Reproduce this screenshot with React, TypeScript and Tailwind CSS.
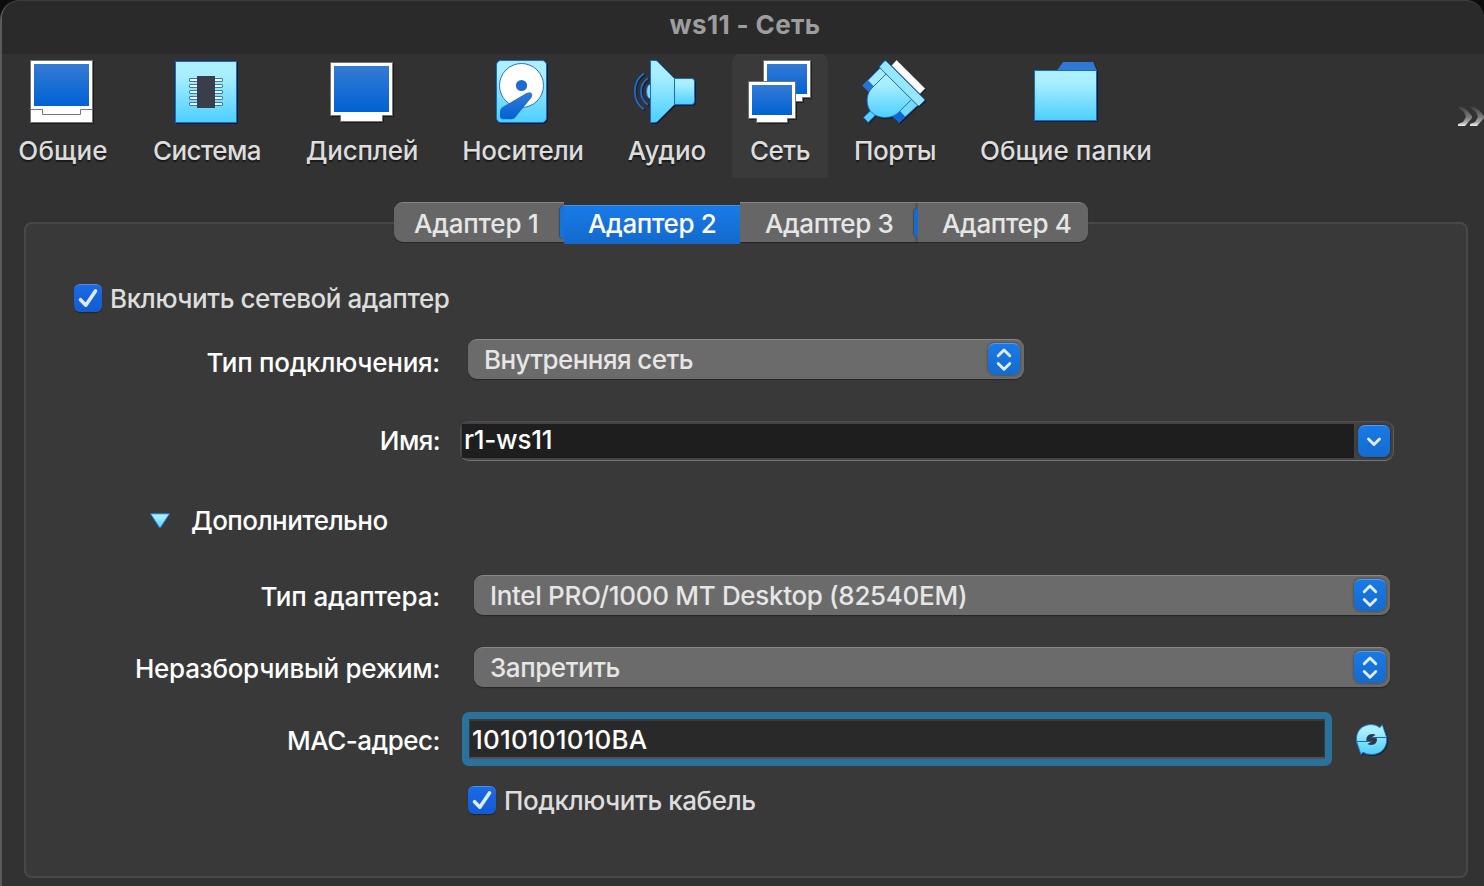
import type { ReactNode } from "react";

const CYAN = "url(#cyan)";
const BLUE = "url(#blue)";
const EDGE = "#1769d6";

function Gradients() {
  return (
    <svg width="0" height="0" className="absolute">
      <defs>
        <linearGradient id="cyan" x1="0" y1="0" x2="0" y2="1">
          <stop offset="0" stopColor="#aef1ff" />
          <stop offset="0.25" stopColor="#a6eeff" />
          <stop offset="1" stopColor="#4ccfff" />
        </linearGradient>
        <linearGradient id="blue" x1="0" y1="0" x2="0" y2="1">
          <stop offset="0" stopColor="#357ad4" />
          <stop offset="1" stopColor="#0062d4" />
        </linearGradient>
        <linearGradient id="more" x1="0" y1="0" x2="0" y2="1">
          <stop offset="0" stopColor="#3c3c3c" />
          <stop offset="0.55" stopColor="#7c7c7c" />
          <stop offset="0.8" stopColor="#a8a8a8" />
          <stop offset="1" stopColor="#f0f0f0" />
        </linearGradient>
      </defs>
    </svg>
  );
}

function Icon({ viewBox, children }: { viewBox: string; children: ReactNode }) {
  return (
    <svg
      width="64"
      height="64"
      viewBox={viewBox}
      className="shrink-0 overflow-visible drop-shadow-[1px_1px_0.5px_rgba(0,0,0,0.45)]"
    >
      {children}
    </svg>
  );
}

const GeneralIcon = () => (
  <Icon viewBox="31 60 64 64">
    <rect x="30.5" y="60.5" width="62" height="62" fill="#fff" stroke="#747474" />
    <rect x="34" y="64" width="55" height="42" fill={BLUE} />
    <path d="M31 109.5H42.5V114.5H80.5V109.5H92" fill="none" stroke="#747474" />
  </Icon>
);

const SystemIcon = () => (
  <Icon viewBox="175 60 64 64">
    <rect x="175.5" y="61.5" width="61" height="61" fill={CYAN} stroke={EDGE} />
    {[78.5, 84.5, 90.5, 96.5, 102.5].map((y) => (
      <rect key={y} x="189.5" y={y} width="33" height="3" rx="0.5" fill="#fff" stroke="#2f78cc" />
    ))}
    <rect x="197" y="76" width="18" height="32" fill="#383e4a" />
  </Icon>
);

const DisplayIcon = () => (
  <Icon viewBox="330 60 64 64">
    <path d="M330.500 62.500H392.500V115.500H382.500V121.500H340.500V115.500H330.500Z" fill="#fff" stroke="#747474" />
    <rect x="334" y="66" width="55" height="46" fill={BLUE} />
  </Icon>
);

const StorageIcon = () => (
  <Icon viewBox="491 60 64 64">
    <rect x="496.500" y="60.500" width="50" height="62" rx="4.500" fill={CYAN} stroke={EDGE} />
    <circle cx="521.500" cy="85.500" r="22" fill="#fff" stroke="#2a70cf" />
    <circle cx="521.500" cy="85.500" r="5.600" fill="#1d6cd3" />
    <path
      d="M526.500 93.100L503.500 106.600C501.200 108 500 109.500 500 112V116Q500 119.300 503.500 119.300H511.500Q514 119.300 515.600 117L531.300 97.800C533.400 95 531.500 92 528.800 92.400Q527.600 92.500 526.500 93.100Z"
      fill={BLUE}
    />
  </Icon>
);

const AudioIcon = () => (
  <Icon viewBox="635 60 64 64">
    <path d="M643.700 73.500A22.500 22.500 0 0 0 643.700 109.300" fill="none" stroke="#1b6fdc" strokeWidth="1.700" />
    <path d="M647.800 78.300A16.200 16.200 0 0 0 647.800 104.700" fill="none" stroke="#1b6fdc" strokeWidth="1.700" />
    <path d="M651 84.500H649Q646.500 86 646.500 91.500T649 98.500H651Z" fill="#7fdcff" stroke={EDGE} />
    <path d="M674.500 78.500H691.500Q694.500 78.500 694.500 81.500V101.500Q694.500 104.500 691.500 104.500H674.500Z" fill={CYAN} stroke={EDGE} />
    <path d="M650.500 60.500H655Q656.500 60.500 657.600 61.600L674.500 78.500V104.500L657.600 121.400Q656.500 122.500 655 122.500H650.500Z" fill={CYAN} stroke={EDGE} />
  </Icon>
);

const NetworkIcon = () => (
  <Icon viewBox="748 60 64 64">
    <path d="M763.500 60.500H810.500V97.500H802.500V101.500H763.500Z" fill="#fff" stroke="#747474" />
    <rect x="767" y="64" width="40" height="30" fill={BLUE} />
    <path d="M748.500 81.500H795.500V118.500H787.500V122.500H756.500V118.500H748.500Z" fill="#fff" stroke="#747474" />
    <rect x="752" y="85" width="40" height="30" fill={BLUE} />
  </Icon>
);

const PortsIcon = () => (
  <Icon viewBox="863 60 64 64">
    <path d="M892 65.500L896.600 60.500L924.800 88.500L920 93.500Z" fill="#fff" stroke="#fff" strokeWidth="0.600" strokeLinejoin="round" />
    <path d="M862.800 85.500L880 68L886 74L868.500 91.500Z" fill="#a4ecff" stroke={EDGE} />
    <path d="M862.800 85.500L868 80.300L874 86.500L868.500 91.500Z" fill="#2870d6" />
    <path d="M911.700 99.300L917.800 105.200L899.300 122.500L893 116.500Z" fill="#76daff" stroke={EDGE} />
    <path d="M899.700 110.700L905.300 116.700L899.300 122.500L893 116.500Z" fill="#0b66d8" />
    <path d="M863.500 117.500L871.200 110L875.800 114.800L868.200 122.500Z" fill="#57d1ff" stroke={EDGE} />
    <path
      d="M886 74L872 88C866.500 93.500 865.800 102.500 869.200 109.200C872.500 115 879 117.500 885.500 117.500C891.500 117.300 895.500 115.500 898.500 112.500L911.700 99.300Z"
      fill={CYAN}
      stroke={EDGE}
      strokeWidth="0.900"
    />
    <path d="M879.500 66.700L884 61.400Q885.300 60.200 886.600 61.400L924.200 99Q925.200 100 924.200 101L919.500 105.500Q918.500 106.200 917.500 105.200L880 68Z" fill="#96e8ff" stroke={EDGE} strokeWidth="0.900" />
  </Icon>
);

const FoldersIcon = () => (
  <Icon viewBox="1034 60 64 64">
    <path d="M1057 70.500L1063 62H1093.300L1097 71Z" fill="#3078d3" />
    <rect x="1034.500" y="70.500" width="62" height="50" fill={CYAN} stroke={EDGE} />
  </Icon>
);

function ToolButton({ className, label, children, active }: { className: string; label: string; children: ReactNode; active?: boolean }) {
  return (
    <button
      className={`flex h-[124px] shrink-0 flex-col items-center rounded-t-lg pt-1.5 text-[#dddddd] ${active ? "bg-[#3a3a3a]" : ""} ${className}`}
    >
      {children}
      <span className="mt-[7px] leading-10 whitespace-nowrap [text-shadow:0_2px_1px_rgba(0,0,0,0.5)]">{label}</span>
    </button>
  );
}

function Check() {
  return (
    <span className="flex size-7 shrink-0 items-center justify-center rounded-md border-t border-[#4e8cf0] bg-linear-to-b from-[#1b6ae8] to-[#125bd0] shadow-[0_1px_1px_rgba(0,0,0,0.4)]">
      <svg width="28" height="28" viewBox="0 0 28 28" fill="none" className="-mt-px">
        <path d="M6.500 15.700L11.800 21.200L21.500 7" stroke="#dfeafc" strokeWidth="3.600" strokeLinecap="round" strokeLinejoin="round" />
      </svg>
    </span>
  );
}

const BLUE_KEY =
  "flex h-8 shrink-0 items-center justify-center rounded-[7px] border-t border-[#4f9cf0] bg-linear-to-b from-[#187ae6] to-[#146bcd] shadow-[0_0_2px_1px_rgba(0,0,0,0.22)]";

function Select({ className, children }: { className: string; children: ReactNode }) {
  return (
    <div
      className={`flex h-10 shrink-0 rounded-[9px] border-t border-[#878787] bg-[#6b6b6b] pr-1 pl-4 text-[#e6e6e6] shadow-[0_1px_1px_rgba(0,0,0,0.35)] ${className}`}
    >
      <span className="flex-1 leading-[39px] whitespace-nowrap">{children}</span>
      <span className={`mt-[3px] w-8 ${BLUE_KEY}`}>
        <svg width="32" height="32" viewBox="0 0 32 32" fill="none" stroke="#e2edfb" strokeWidth="2.900" strokeLinecap="round" strokeLinejoin="round">
          <path d="M10.200 11.700L16 6L21.800 11.700" />
          <path d="M10.200 19.500L16 25.200L21.800 19.500" />
        </svg>
      </span>
    </div>
  );
}

function Label({ className, children }: { className: string; children: ReactNode }) {
  return <div className={`w-[414px] shrink-0 text-right leading-10 whitespace-nowrap text-white ${className}`}>{children}</div>;
}

export default function App() {
  return (
    <div className="h-[886px] w-[1484px] overflow-hidden bg-[#0c0c0c] font-['Inter',sans-serif] text-[26px] font-[450]">
      <Gradients />
      <div className="flex h-full w-full flex-col rounded-t-[20px] border-l-2 border-l-[#5a5a5a] bg-[#323232]">
        <header className="flex h-[54px] shrink-0 justify-center rounded-t-[18px] border-t border-t-[#3d3d3d] bg-[#2a2a2a] pl-1">
          <h1 className="text-[26px] leading-[48px] font-bold tracking-[0.35px] text-[#9d9d9d]">ws11 - Сеть</h1>
        </header>

        <nav className="-ml-0.5 flex h-[124px] shrink-0">
          <ToolButton className="w-[126px] tracking-[0.15px]" label="Общие"><GeneralIcon /></ToolButton>
          <ToolButton className="ml-2 w-[146px] tracking-[-0.6px]" label="Система"><SystemIcon /></ToolButton>
          <ToolButton className="w-[164px] tracking-[-0.2px]" label="Дисплей"><DisplayIcon /></ToolButton>
          <ToolButton className="w-[158px] tracking-[-0.3px]" label="Носители"><StorageIcon /></ToolButton>
          <ToolButton className="w-[130px]" label="Аудио"><AudioIcon /></ToolButton>
          <ToolButton className="w-24 tracking-[-0.5px]" active label="Сеть"><NetworkIcon /></ToolButton>
          <ToolButton className="w-[134px] tracking-[-0.3px]" label="Порты"><PortsIcon /></ToolButton>
          <ToolButton className="w-[208px] tracking-[0.05px]" label="Общие папки"><FoldersIcon /></ToolButton>
          <svg width="26" height="20" viewBox="0 0 26 20" className="mt-[52px] ml-auto shrink-0" fill="url(#more)">
            <path d="M0 0.500H4L9 4L14 10V12L7 20H0V18L5 16L8 11L6 6L2 3Z" />
            <path d="M12 0.500H16L21 4L26 10V12L19 20H12V18L17 16L20 11L18 6L14 3Z" />
          </svg>
        </nav>

        <main className="mt-[44px] mr-4 ml-[22px] flex h-[656px] shrink-0 flex-col rounded-lg border-2 border-[#484848] bg-[#393939]">
          <div className="-mt-[22px] ml-[368px] flex h-[42px] w-[694px] shrink-0 leading-[41px] text-[#e6e6e6]">
            <div className="h-10 w-[170px] rounded-l-[9px] border-t border-[#858585] bg-[#666666] pl-5 tracking-[-0.2px] whitespace-nowrap shadow-[0_1px_1px_rgba(0,0,0,0.3)]">
              Адаптер 1
            </div>
            <div className="z-10 mt-[3px] -ml-1 flex h-[39px] w-[180px]">
              <span className="mt-px h-[33px] w-1 rounded-l-full bg-[#1673de] shadow-[-1px_0_1px_rgba(0,0,0,0.3)]" />
              <span className="h-[39px] w-[176px] border-t border-[#3f93f0] bg-linear-to-b from-[#187be8] to-[#1469cb] pl-6 leading-[35px] tracking-[-0.35px] whitespace-nowrap text-white">
                Адаптер 2
              </span>
            </div>
            <div className="h-10 w-[176px] border-t border-[#858585] bg-[#666666] pl-[25px] tracking-[-0.4px] whitespace-nowrap shadow-[0_1px_1px_rgba(0,0,0,0.3)]">
              Адаптер 3
            </div>
            <div className="flex h-10 w-[172px] rounded-r-[9px] border-t border-[#858585] bg-[#666666] shadow-[0_1px_1px_rgba(0,0,0,0.3)]">
              <span className="-ml-0.5 flex h-[39px] w-1 items-center bg-linear-to-r from-[#666666] from-25% to-[#575757] to-25%">
                <span className="h-[29px] w-1 rounded-l-full bg-[#146cd2] shadow-[-1px_0_1px_rgba(0,0,0,0.3)]" />
              </span>
              <span className="pl-6 tracking-[-0.35px] whitespace-nowrap">Адаптер 4</span>
            </div>
          </div>

          <label className="mt-10 ml-12 flex h-7 shrink-0 items-center gap-2 text-[#dddddd]">
            <Check />
            <span className="pt-px leading-7 tracking-[-0.45px] whitespace-nowrap">Включить сетевой адаптер</span>
          </label>

          <div className="mt-[27px] flex h-10 shrink-0">
            <Label className="pt-1 tracking-[-0.27px]">Тип подключения:</Label>
            <Select className="ml-7 w-[556px] tracking-[-0.58px]">Внутренняя сеть</Select>
          </div>

          <div className="mt-[42px] flex h-10 shrink-0">
            <Label className="tracking-[-0.6px]">Имя:</Label>
            <div className="ml-5 flex h-10 w-[934px] rounded-[9px] border border-t-[#505050] border-r-[#5c5c5c] border-b-[#757575] border-l-[#505050] bg-[#424242] pt-0.5 pl-px">
              <div className="h-[34px] w-[892px] bg-[#1e1e1e] pl-0.5 leading-[32px] tracking-[-0.25px] text-white">r1-ws11</div>
              <span className={`mt-px ml-1 w-8 ${BLUE_KEY}`}>
                <svg width="32" height="32" viewBox="0 0 32 32" fill="none" stroke="#e2edfb" strokeWidth="2.900" strokeLinecap="round" strokeLinejoin="round">
                  <path d="M10.500 13L16 18.500L21.500 13" />
                </svg>
              </span>
            </div>
          </div>

          <div className="mt-10 ml-[124px] flex h-10 shrink-0 items-center gap-[21px]">
            <svg width="20" height="16" viewBox="0 0 20 16">
              <path d="M0.500 0.800H19.500L10.700 14.300Q10 15.200 9.300 14.300Z" fill={CYAN} stroke="#1f7be0" />
            </svg>
            <span className="leading-10 tracking-[-0.55px] text-white">Дополнительно</span>
          </div>

          <div className="mt-[34px] flex h-10 shrink-0">
            <Label className="pt-0.5 tracking-[-0.15px]">Тип адаптера:</Label>
            <Select className="ml-[34px] w-[916px] tracking-[-0.33px]">Intel PRO/1000 MT Desktop (82540EM)</Select>
          </div>

          <div className="mt-8 flex h-10 shrink-0">
            <Label className="pt-0.5 tracking-[-0.28px]">Неразборчивый режим:</Label>
            <Select className="ml-[34px] w-[916px] tracking-[-0.45px]">Запретить</Select>
          </div>

          <div className="mt-[25px] flex h-[54px] shrink-0">
            <Label className="pt-[9px] tracking-[-0.5px]">MAC-адрес:</Label>
            <div className="ml-[22px] h-[54px] w-[870px] rounded-[7px] bg-[#2a719c] p-[7px]">
              <div className="h-10 border-x border-t-2 border-b-2 border-x-[#3a3a3a] border-t-[#3a3a3a] border-b-[#525252] bg-[#292929] pl-0.5 leading-[38px] tracking-[0.17px] text-white">
                1010101010BA
              </div>
            </div>
            <svg width="32" height="32" viewBox="1356 724 32 32" className="mt-3 ml-6 shrink-0 overflow-visible drop-shadow-[1px_1px_0.5px_rgba(0,0,0,0.45)]">
              <path
                d="M1356.500 741.500C1355.500 731 1362 724.500 1371.500 724.500Q1376 724.500 1380 727.500L1382.300 724.500L1386.700 737.500C1387.500 748 1381 754.500 1371.500 754.500Q1366.500 754.500 1363 752.300L1361 754.500Z"
                fill={CYAN}
                stroke="#1f74d8"
                strokeLinejoin="round"
              />
              <path d="M1366.500 741.500Q1365.500 736 1370 734.200Q1374 733.600 1375.500 735L1371.500 737.500H1376.500Q1378 742 1374 744.500Q1370 745.500 1367.500 744L1371.500 741.500Z" fill="#323844" />
              <path d="M1356.500 741.500H1371.500M1371.500 737.500H1386.500" stroke="#1769c8" />
            </svg>
          </div>

          <label className="mt-5 ml-[442px] flex h-7 shrink-0 items-center gap-2 text-[#dddddd]">
            <Check />
            <span className="pt-px leading-7 tracking-[-0.45px] whitespace-nowrap">Подключить кабель</span>
          </label>
        </main>
      </div>
    </div>
  );
}
